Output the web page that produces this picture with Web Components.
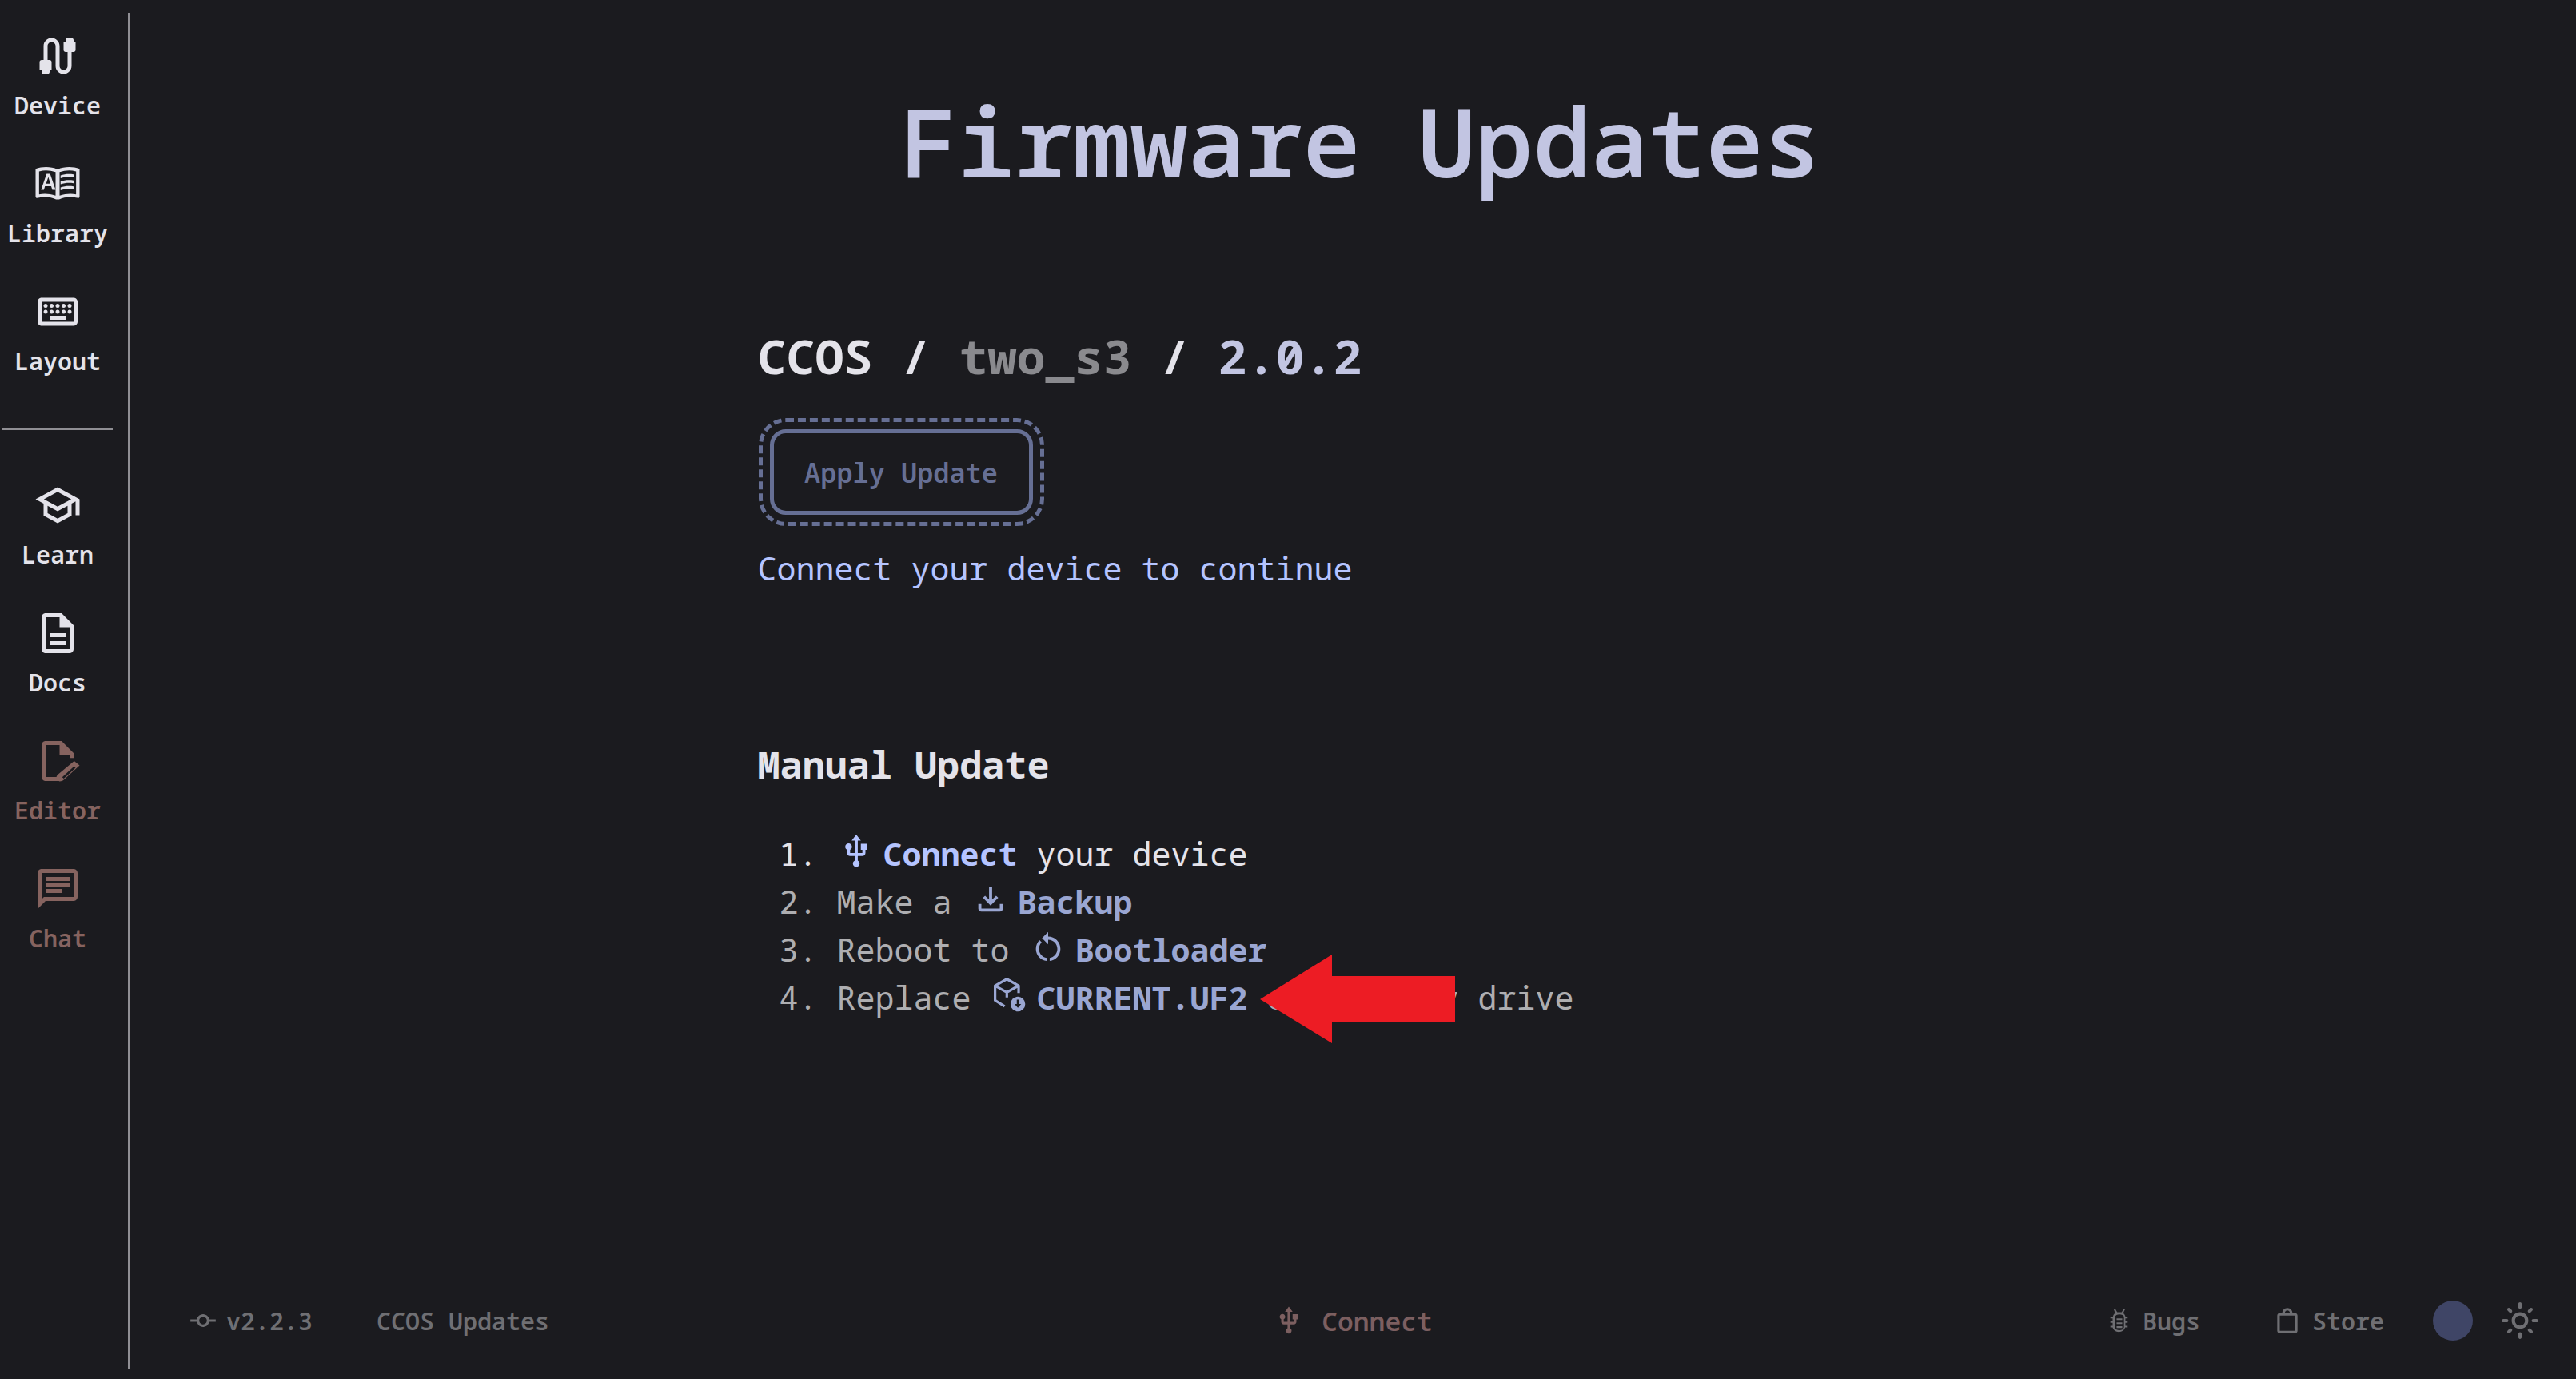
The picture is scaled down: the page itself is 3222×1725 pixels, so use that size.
<!DOCTYPE html>
<html lang="en">
<head>
<meta charset="utf-8">
<title>Firmware Updates</title>
<style>
  html, body { margin: 0; height: 100%; background: #1b1b1f; }
  body { font-family: "Noto Sans Mono", "DejaVu Sans Mono", monospace; color: #e4e3ea; overflow: hidden; }
</style>
</head>
<body>
<update-app></update-app>

<script>
// all icons live on a 24 unit grid
const ICONS = {
  cable: '<path d="M20 5V4c0-.55-.45-1-1-1h-2c-.55 0-1 .45-1 1v1h-1v4c0 .55.45 1 1 1h1v7c0 1.100-.9 2-2 2s-2-.9-2-2V7c0-2.210-1.790-4-4-4S5 4.790 5 7v7H4c-.55 0-1 .45-1 1v4h1v1c0 .55.45 1 1 1h2c.55 0 1-.45 1-1v-1h1v-4c0-.55-.45-1-1-1H7V7c0-1.100.9-2 2-2s2 .9 2 2v10c0 2.210 1.790 4 4 4s4-1.790 4-4v-7h1c.55 0 1-.45 1-1V5h-1z"/>',
  book: '<g transform="scale(.5)"><path fill-rule="evenodd" d="M2 9c7-2.500 15-2.500 22 .5 7-3 15-3 22-.5v27.500c0 1.500-1 1.800-2.500 1.500-6-1.500-13-1-18 1.500h-3c-5-2.500-12-3-18-1.500C3 38.300 2 38 2 36.500zm3.500 2.500v23c5-1 10.500-.7 16.500 1.200V12.200c-5.500-1.900-11-2.300-16.500-.7zm20.500.7v23.500c6-1.900 11.500-2.200 16.500-1.200v-23c-5.500-1.600-11-1.200-16.500.7z"/><path fill-rule="evenodd" d="M7.500 30L13 14h3.500L22 30h-3.300l-1.100-3.600h-6.200L10.300 30zm5-6.300h4.300l-2.100-6.600z"/><path d="M27 15.500c4-1.300 8-1.600 13-1v2.800c-5-.6-9-.3-13 1zm0 6c4-1.300 8-1.600 13-1v2.800c-5-.6-9-.3-13 1zm0 6c4-1.300 8-1.600 13-1v2.800c-5-.6-9-.3-13 1z"/></g>',
  keyboard: '<path d="M20 7v10H4V7h16m0-2H4c-1.100 0-1.990.9-1.990 2L2 17c0 1.100.9 2 2 2h16c1.100 0 2-.9 2-2V7c0-1.100-.9-2-2-2z"/><path d="M8 14h8v2H8z"/><g><circle cx="6" cy="9" r="1"/><circle cx="9" cy="9" r="1"/><circle cx="12" cy="9" r="1"/><circle cx="15" cy="9" r="1"/><circle cx="18" cy="9" r="1"/><circle cx="6" cy="12" r="1"/><circle cx="9" cy="12" r="1"/><circle cx="12" cy="12" r="1"/><circle cx="15" cy="12" r="1"/><circle cx="18" cy="12" r="1"/></g>',
  school: '<path d="M12 3L1 9l4 2.180v6L12 21l7-3.820v-6l2-1.090V17h2V9L12 3zm6.820 6L12 12.720 5.180 9 12 5.280 18.820 9zM17 15.990l-5 2.730-5-2.730v-3.720L12 15l5-2.730v3.720z"/>',
  doc: '<path d="M8 16h8v2H8zm0-4h8v2H8zm6-10H6c-1.100 0-2 .9-2 2v16c0 1.100.89 2 1.990 2H18c1.100 0 2-.9 2-2V8l-6-6zm4 18H6V4h7v5h5v11z"/>',
  editdoc: '<path d="M6 2h8l6 6v2.500h-2V9h-5V4H6v16h6v2H6c-1.100 0-2-.9-2-2V4c0-1.100.9-2 2-2z"/><path fill-rule="evenodd" d="M20.300 12l2.700 2.200-8 7.300c-1 .8-2.500.9-3.200.2s-.6-2 .3-2.900zm-.1 2.700l-5.900 5.400.8.700 5.900-5.400z"/>',
  chat: '<path d="M20 2H4c-1.100 0-2 .9-2 2v18l4-4h14c1.100 0 2-.9 2-2V4c0-1.100-.9-2-2-2zm0 14H5.170L4 17.170V4h16v12zM6 12h8v2H6zm0-3h12v2H6zm0-3h12v2H6z"/>',
  usb: '<path d="M15 7v4h1v2h-3V5h2l-3-4-3 4h2v8H8v-2.070c.7-.37 1.200-1.080 1.200-1.930 0-1.210-.99-2.200-2.200-2.200-1.210 0-2.200.99-2.200 2.200 0 .85.5 1.560 1.200 1.930V13c0 1.110.89 2 2 2h3v3.050c-.71.37-1.200 1.100-1.200 1.950 0 1.220.99 2.200 2.200 2.200 1.210 0 2.200-.98 2.200-2.200 0-.85-.49-1.580-1.200-1.950V15h3c1.110 0 2-.89 2-2v-2h1V7h-4z"/>',
  download: '<path d="M18 15v3H6v-3H4v3c0 1.100.9 2 2 2h12c1.100 0 2-.9 2-2v-3h-2zm-1-4l-1.410-1.410L13 12.170V4h-2v8.170L8.410 9.590 7 11l5 5 5-5z"/>',
  restart: '<path d="M12 5V2L8 6l4 4V7c3.310 0 6 2.690 6 6 0 2.970-2.160 5.430-5 5.910v2.020c3.950-.49 7-3.850 7-7.930 0-4.420-3.580-8-8-8zm-6 8c0-1.650.67-3.150 1.760-4.240L6.340 7.340C4.900 8.790 4 10.790 4 13c0 4.080 3.050 7.440 7 7.930v-2.020c-2.840-.48-5-2.940-5-5.910z"/>',
  pkg: '<g transform="scale(.48)"><path fill="none" stroke="currentColor" stroke-width="3.500" stroke-linejoin="round" d="M21 3L5 12v20l13 8M21 3l16 9v10M5 12l16 9 16-9M21 21v7"/><circle cx="36" cy="37" r="10"/><path fill="#1b1b1f" d="M34.500 31h3v6h3l-4.500 5-4.500-5h3z"/></g>',
  commit: '<path d="M16.900 11a5 5 0 0 0-9.800 0H2v2h5.100a5 5 0 0 0 9.800 0H22v-2h-5.100zM12 15c-1.650 0-3-1.350-3-3s1.350-3 3-3 3 1.350 3 3-1.350 3-3 3z"/>',
  bug: '<g transform="scale(.5)"><path fill-rule="evenodd" d="M14 4h3l3 5h8l3-5h3l-3.500 7c2 1.500 3.500 3.500 4 6h4v3h-4v5h4v3h-4v5h4v3h-4.500c-1.500 5-5.500 8-11 8s-9.500-3-11-8H8v-3h4v-5H8v-3h4v-5H8v-3h4.500c.5-2.500 2-4.500 4-6zm2 13v19c1 3.500 4 5 8 5s7-1.500 8-5V17c-1-2.500-4-4-8-4s-7 1.500-8 4z"/><path d="M19 20h10v3H19zM19 27h10v3H19zM19 34h10v3H19z"/></g>',
  bag: '<path d="M18 6h-2c0-2.210-1.790-4-4-4S8 3.790 8 6H6c-1.100 0-2 .9-2 2v12c0 1.100.9 2 2 2h12c1.100 0 2-.9 2-2V8c0-1.100-.9-2-2-2zm-6-2c1.100 0 2 .9 2 2h-4c0-1.100.9-2 2-2zm6 16H6V8h12v12z"/>',
  sun: '<path d="M12 9c1.650 0 3 1.350 3 3s-1.350 3-3 3-3-1.350-3-3 1.350-3 3-3m0-2c-2.760 0-5 2.240-5 5s2.240 5 5 5 5-2.240 5-5-2.240-5-5-5zM2 13h2c.55 0 1-.45 1-1s-.45-1-1-1H2c-.55 0-1 .45-1 1s.45 1 1 1zm18 0h2c.55 0 1-.45 1-1s-.45-1-1-1h-2c-.55 0-1 .45-1 1s.45 1 1 1zM11 2v2c0 .55.45 1 1 1s1-.45 1-1V2c0-.55-.45-1-1-1s-1 .45-1 1zm0 18v2c0 .55.45 1 1 1s1-.45 1-1v-2c0-.55-.45-1-1-1s-1 .45-1 1zM5.990 4.580c-.39-.39-1.030-.39-1.410 0-.39.39-.39 1.030 0 1.410l1.060 1.060c.39.39 1.030.39 1.410 0s.39-1.030 0-1.410L5.990 4.580zm12.370 12.370c-.39-.39-1.030-.39-1.410 0-.39.39-.39 1.030 0 1.410l1.060 1.060c.39.39 1.030.39 1.410 0 .39-.39.39-1.030 0-1.410l-1.060-1.060zm1.060-10.960c.39-.39.39-1.030 0-1.410-.39-.39-1.030-.39-1.410 0l-1.060 1.060c-.39.39-.39 1.030 0 1.410s1.030.39 1.410 0l1.060-1.060zM7.050 18.360c.39-.39.39-1.030 0-1.410-.39-.39-1.030-.39-1.410 0l-1.060 1.060c-.39.39-.39 1.030 0 1.410s1.030.39 1.410 0l1.060-1.060z"/>'
};

class AppIcon extends HTMLElement {
  connectedCallback() {
    const size = this.getAttribute('size') || 48;
    this.attachShadow({ mode: 'open' }).innerHTML = `
      <style>
        :host { display: inline-flex; line-height: 0; }
        svg { fill: currentColor; display: block; }
      </style>
      <svg width="${size}" height="${size}" viewBox="0 0 24 24">${ICONS[this.getAttribute('name')]}</svg>`;
  }
}
customElements.define('app-icon', AppIcon);

class NavItem extends HTMLElement {
  connectedCallback() {
    const muted = this.hasAttribute('muted');
    this.attachShadow({ mode: 'open' }).innerHTML = `
      <style>
        :host {
          display: flex;
          flex-direction: column;
          align-items: center;
          height: 160px;
          padding-top: 40px;
          box-sizing: border-box;
          font-size: 30px;
          line-height: 36px;
          font-weight: 600;
          color: ${muted ? '#86635f' : '#e4e3ea'};
        }
        span { margin-top: 14px; }
      </style>
      <app-icon name="${this.getAttribute('icon')}" size="60"></app-icon>
      <span><slot></slot></span>`;
  }
}
customElements.define('nav-item', NavItem);

class SideNav extends HTMLElement {
  constructor() {
    super();
    this.attachShadow({ mode: 'open' }).innerHTML = `
      <style>
        :host {
          display: flex;
          flex-direction: column;
          width: 144px;
          flex: none;
          margin: 16px 0 12px;
          padding-right: 16px;
          border-right: 3px solid #908f94;
        }
        .nav { margin-top: -16px; }
        hr { border: 0; height: 3px; background: #908f94; margin: 55px 0 24px 3px; width: 138px; flex: none; }
      </style>
      <div class="nav"><slot name="top"></slot></div>
      <hr>
      <div><slot name="bottom"></slot></div>`;
  }
}
customElements.define('side-nav', SideNav);

class InlineAction extends HTMLElement {
  connectedCallback() {
    this.attachShadow({ mode: 'open' }).innerHTML = `
      <style>
        :host { display: inline; font-weight: 700; color: var(--action, #b5c4ff); white-space: nowrap; }
        app-icon { position: relative; top: -7px; vertical-align: middle; margin: 0 11px 0 1px; }
      </style>
      <app-icon name="${this.getAttribute('icon')}" size="46"></app-icon><slot></slot>`;
  }
}
customElements.define('inline-action', InlineAction);

class FlashPanel extends HTMLElement {
  constructor() {
    super();
    this.attachShadow({ mode: 'open' }).innerHTML = `
      <style>
        :host { display: block; width: 1490px; font-size: 40px; line-height: 60px; }
        h2 { font-size: 60px; line-height: 90px; font-weight: 700; margin: 0; color: #e4e3ea; }
        .board { color: #8a8a8e; }
        .ver { color: #c2c5e2; }
        button {
          display: block;
          margin: 47px 0 0 15px;
          width: 329px;
          height: 107px;
          font: inherit;
          font-size: 33.6px;
          font-weight: 600;
          color: #666f94;
          background: transparent;
          border: 5px solid #666f94;
          border-radius: 20px;
          outline: 5px dashed #666f94;
          outline-offset: 9px;
        }
        .hint { color: #b5c4ff; margin: 37px 0 0; }
        h3 { font-size: 46.800px; line-height: 70px; font-weight: 700; margin: 180px 0 0; color: #e4e3ea; }
        ol { list-style: none; margin: 47px 0 0; padding: 0; }
        li { display: flex; }
        li b { font-weight: 400; width: 99px; padding-left: 27px; box-sizing: border-box; flex: none; }
        .dim { color: #aeaeb1; --action: #9aa6d2; }
        .arrow { position: absolute; left: 1576px; top: 1194px; }
      </style>
      <h2>CCOS / <span class="board">two_s3</span> / <span class="ver">2.0.2</span></h2>
      <button disabled>Apply Update</button>
      <p class="hint">Connect your device to continue</p>
      <h3>Manual Update</h3>
      <ol>
        <li><b>1.</b><span><inline-action icon="usb">Connect</inline-action> your device</span></li>
        <li class="dim"><b>2.</b><span>Make a <inline-action icon="download">Backup</inline-action></span></li>
        <li class="dim"><b>3.</b><span>Reboot to <inline-action icon="restart">Bootloader</inline-action></span></li>
        <li class="dim"><b>4.</b><span>Replace <inline-action icon="pkg">CURRENT.UF2</inline-action> on the key drive</span></li>
      </ol>
      <svg class="arrow" width="244" height="111" viewBox="0 0 244 111"><path fill="#ed1c24" d="M0 56L90 0v27h154v58H90v26z"/></svg>`;
  }
}
customElements.define('flash-panel', FlashPanel);

class StatusBar extends HTMLElement {
  constructor() {
    super();
    this.attachShadow({ mode: 'open' }).innerHTML = `
      <style>
        :host {
          display: grid;
          grid-template-columns: 1fr auto 1fr;
          align-items: center;
          height: 60px;
          padding: 0 45px;
          font-size: 30px;
          font-weight: 600;
          color: #6f6f73;
        }
        div { display: flex; align-items: center; }
        .left { gap: 80px; padding-left: 27px; }
        .left span { gap: 10px; }
        .right { justify-content: flex-end; }
        span { display: inline-flex; align-items: center; gap: 12px; }
        .conn { color: #7c5f60; font-size: 33px; gap: 22px; }
        .store { margin-left: 90px; }
        .dot { width: 50px; height: 50px; border-radius: 50%; background: #3f4566; margin: 0 34px 0 61px; }
      </style>
      <div class="left">
        <span><app-icon name="commit" size="38"></app-icon>v2.2.3</span>
        <span>CCOS Updates</span>
      </div>
      <span class="conn"><app-icon name="usb" size="38"></app-icon>Connect</span>
      <div class="right">
        <span><app-icon name="bug" size="34"></app-icon>Bugs</span>
        <span class="store"><app-icon name="bag" size="38"></app-icon>Store</span>
        <i class="dot"></i>
        <app-icon name="sun" size="50"></app-icon>
      </div>`;
  }
}
customElements.define('status-bar', StatusBar);

class UpdateApp extends HTMLElement {
  constructor() {
    super();
    this.attachShadow({ mode: 'open' }).innerHTML = `
      <style>
        :host { display: flex; height: 100vh; position: relative; }
        .main { flex: 1; display: flex; flex-direction: column; min-width: 0; }
        .page { flex: 1; display: flex; flex-direction: column; align-items: center; }
        h1 { font-size: 120px; line-height: 180px; font-weight: 600; color: #c2c5e2; margin: 86px 0 0; padding-left: 18px; text-align: center; }
        flash-panel { margin-top: 134px; }
        status-bar { margin-bottom: 43px; }
      </style>
      <side-nav>
        <nav-item slot="top" icon="cable">Device</nav-item>
        <nav-item slot="top" icon="book">Library</nav-item>
        <nav-item slot="top" icon="keyboard">Layout</nav-item>
        <nav-item slot="bottom" icon="school">Learn</nav-item>
        <nav-item slot="bottom" icon="doc">Docs</nav-item>
        <nav-item slot="bottom" icon="editdoc" muted>Editor</nav-item>
        <nav-item slot="bottom" icon="chat" muted>Chat</nav-item>
      </side-nav>
      <div class="main">
        <div class="page">
          <h1>Firmware Updates</h1>
          <flash-panel></flash-panel>
        </div>
        <status-bar></status-bar>
      </div>`;
  }
}
customElements.define('update-app', UpdateApp);
</script>
</body>
</html>
